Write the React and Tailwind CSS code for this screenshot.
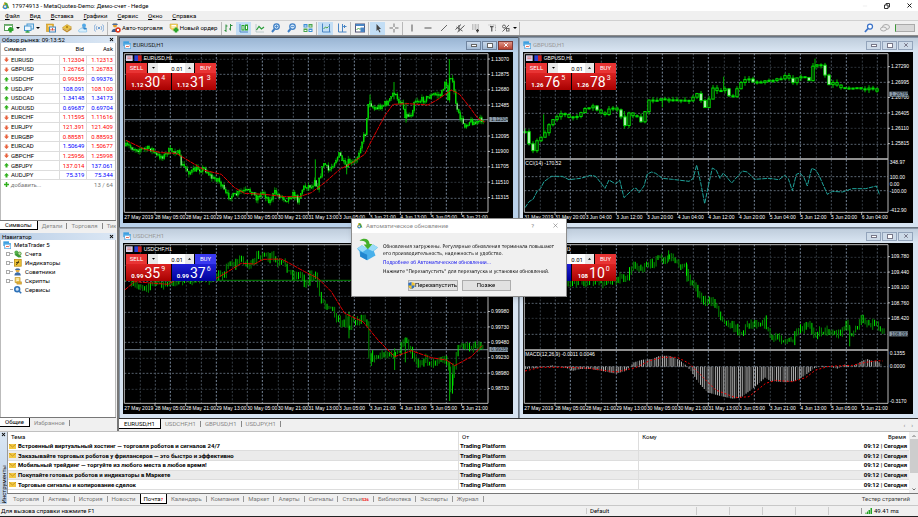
import { useState } from 'react';
import { X, Minus } from 'lucide-react';

const QUOTES = [
  { symbol: 'EURUSD', up: false, bid: '1.12304', bidUp: false, ask: '1.12313', askUp: false },
  { symbol: 'GBPUSD', up: false, bid: '1.26765', bidUp: false, ask: '1.26783', askUp: false },
  { symbol: 'USDCHF', up: true, bid: '0.99359', bidUp: false, ask: '0.99376', askUp: true },
  { symbol: 'USDJPY', up: true, bid: '108.091', bidUp: true, ask: '108.100', askUp: false },
  { symbol: 'USDCAD', up: true, bid: '1.34148', bidUp: true, ask: '1.34173', askUp: true },
  { symbol: 'AUDUSD', up: true, bid: '0.69687', bidUp: true, ask: '0.69704', askUp: true },
  { symbol: 'EURCHF', up: false, bid: '1.11595', bidUp: false, ask: '1.11616', askUp: false },
  { symbol: 'EURJPY', up: false, bid: '121.391', bidUp: false, ask: '121.409', askUp: false },
  { symbol: 'EURGBP', up: false, bid: '0.88581', bidUp: false, ask: '0.88593', askUp: false },
  { symbol: 'EURCAD', up: false, bid: '1.50649', bidUp: true, ask: '1.50677', askUp: false },
  { symbol: 'GBPCHF', up: false, bid: '1.25956', bidUp: false, ask: '1.25998', askUp: false },
  { symbol: 'GBPJPY', up: true, bid: '137.014', bidUp: false, ask: '137.061', askUp: true },
  { symbol: 'AUDJPY', up: true, bid: '75.319', bidUp: true, ask: '75.344', askUp: true },
];

const MAILS = [
  'Встроенный виртуальный хостинг — торговля роботов и сигналов 24/7',
  'Заказывайте торговых роботов у фрилансеров — это быстро и эффективно',
  'Мобильный трейдинг — торгуйте из любого места в любое время!',
  'Покупайте готовых роботов и индикаторы в Маркете',
  'Торговые сигналы и копирование сделок',
];

const TOOL_TABS = [
  ['Торговля'], ['Активы'], ['История'], ['Новости'], ['Почта', '7'], ['Календарь'], ['Компания'],
  ['Маркет'], ['Алерты'], ['Сигналы'], ['Статьи', '526'], ['Библиотека'], ['Эксперты'], ['Журнал'],
];

// Chart space is 3 units per pixel
const CHARTS = [
  {
    symbol: 'EURUSD', active: true, view: '15 48 1170 513', top: 52, bottom: 529, priceBottom: 529,
    style: 'candles', step: 4.6, bid: 251, tag: '1.12304', hStart: 69,
    sell: ['1.12', '30', '4'], buy: ['1.12', '31', '3'], buyUp: false,
    prices: ['1.13070', '1.12875', '1.12680', '1.12485', '', '1.12095', '1.11900', '1.11705', '1.11510', '1.11315'],
    times: ['27 May 2019', '28 May 05:00', '28 May 21:00', '29 May 13:00', '30 May 05:00', '30 May 21:00', '31 May 13:00', '3 Jun 05:00', '3 Jun 21:00', '4 Jun 13:00', '5 Jun 05:00', '5 Jun 21:00'],
    path: [[24, 330], [60, 340], [100, 338], [115, 360], [140, 360], [150, 345], [178, 345], [190, 385], [215, 410], [240, 398], [262, 400], [285, 430], [300, 428], [325, 478], [350, 480], [365, 468], [400, 465], [415, 485], [435, 468], [455, 497], [470, 470], [490, 482], [505, 490], [525, 475], [540, 492], [555, 455], [575, 448], [582, 455], [590, 425], [597, 460], [612, 400], [618, 380], [632, 405], [650, 375], [665, 355], [685, 400], [692, 375], [700, 385], [715, 375], [730, 320], [742, 290], [748, 220], [755, 195], [768, 220], [800, 205], [815, 195], [828, 165], [840, 200], [850, 190], [862, 240], [880, 235], [890, 190], [905, 195], [930, 185], [950, 175], [970, 178], [982, 130], [990, 190], [996, 100], [1010, 180], [1018, 230], [1040, 268], [1055, 255], [1075, 262], [1100, 245]],
    spikes: [[994, 69, 130], [828, 138, 190], [592, 370, 450], [864, 200, 260], [686, 385, 415], [756, 176, 215]],
    ma: '24,313 80,340 130,350 175,352 260,403 310,415 350,455 380,472 440,475 500,482 545,482 580,470 620,440 665,400 700,382 740,355 760,315 800,240 825,205 870,203 930,207 960,190 1000,162 1025,175 1060,220 1080,248 1100,258',
  },
  {
    symbol: 'GBPUSD', view: '12 48 1170 513', top: 52, bottom: 529, priceBottom: 366,
    style: 'hollow', step: 12, bid: 175, tag: '1.26765', hStart: 92,
    sell: ['1.26', '76', '5'], buy: ['1.26', '78', '3'], buyUp: false,
    prices: ['1.27290', '1.26995', '1.26700', '1.26405', '1.26110', '1.25815'],
    times: ['31 May 2019', '31 May 20:00', '3 Jun 04:00', '3 Jun 12:00', '3 Jun 20:00', '4 Jun 04:00', '4 Jun 12:00', '4 Jun 20:00', '5 Jun 04:00', '5 Jun 12:00', '5 Jun 20:00', '6 Jun 04:00'],
    path: [[18, 290], [30, 325], [45, 350], [55, 310], [75, 295], [90, 265], [105, 245], [130, 230], [150, 245], [180, 240], [200, 215], [225, 210], [240, 230], [262, 238], [275, 210], [300, 225], [318, 270], [330, 232], [350, 240], [370, 265], [385, 192], [410, 190], [440, 193], [470, 193], [510, 192], [540, 170], [548, 205], [560, 215], [575, 180], [582, 155], [600, 165], [615, 155], [630, 180], [645, 180], [655, 155], [668, 135], [690, 128], [700, 140], [750, 133], [790, 130], [800, 118], [820, 140], [838, 118], [860, 128], [872, 138], [880, 90], [900, 88], [912, 90], [925, 150], [940, 140], [970, 160], [1000, 153], [1030, 160], [1060, 155], [1085, 175]],
    spikes: [[74, 235, 300], [614, 122, 160], [888, 68, 100], [430, 190, 214], [316, 225, 278]],
    indicator: {
      label: 'CCI(14) -170.52', kind: 'line', levels: [422, 464],
      prices: [[379, '348.97'], [424, '100.00'], [444, '0.00'], [466, '-100.00'], [522, '-412.90']],
      line: '18,515 30,497 42,490 55,465 65,457 75,437 97,421 130,421 150,431 185,427 215,418 230,421 245,440 258,457 270,432 290,444 302,432 315,485 345,457 352,457 360,470 375,450 385,414 398,408 410,412 430,427 460,430 510,436 522,428 533,387 545,440 557,503 568,450 580,396 592,403 603,427 613,411 638,441 670,405 685,408 707,430 750,427 780,431 797,418 808,428 820,464 832,415 843,411 855,425 865,450 878,397 890,402 900,418 925,475 940,466 970,468 1000,458 1040,458 1072,450 1082,477',
    },
  },
  {
    symbol: 'USDCHF', view: '15 54 1170 513', top: 58, bottom: 535, priceBottom: 535,
    style: 'bars', step: 5.7, bid: 374, order: 166, tag: '0.99359', hStart: 121,
    sell: ['0.99', '35', '9'], buy: ['0.99', '37', '6'], buyUp: true,
    prices: ['', '', '', '0.99980', '0.99730', '0.99480', '0.99230', '0.98980', '0.98730'],
    times: ['27 May 2019', '28 May 05:00', '28 May 21:00', '29 May 13:00', '30 May 05:00', '30 May 21:00', '31 May 13:00', '3 Jun 05:00', '3 Jun 21:00', '4 Jun 13:00', '5 Jun 05:00', '5 Jun 21:00'],
    path: [[40, 180], [90, 185], [110, 170], [130, 175], [150, 180], [170, 165], [295, 160], [320, 140], [335, 110], [350, 120], [370, 100], [385, 118], [408, 120], [420, 85], [432, 90], [440, 95], [450, 105], [460, 88], [478, 120], [500, 112], [515, 145], [530, 150], [550, 150], [565, 180], [575, 150], [595, 160], [605, 210], [620, 240], [640, 240], [655, 280], [675, 300], [685, 270], [692, 320], [700, 285], [725, 285], [738, 270], [748, 300], [752, 390], [765, 400], [800, 390], [815, 380], [828, 395], [850, 370], [862, 350], [875, 375], [890, 410], [900, 415], [920, 400], [940, 415], [965, 405], [985, 405], [993, 430], [997, 500], [1008, 430], [1018, 370], [1035, 360], [1050, 370], [1075, 358], [1100, 372]],
    spikes: [[995, 410, 528], [693, 260, 340], [830, 370, 435], [862, 337, 412], [760, 385, 423], [1005, 415, 482]],
    ma: '20,195 50,170 150,178 200,150 295,160 330,140 370,115 410,117 435,103 490,102 515,115 560,140 600,160 640,200 680,265 735,290 780,345 830,395 880,377 940,398 985,405 1010,422 1060,395 1092,362',
  },
  {
    symbol: 'USDJPY', view: '12 54 1170 513', top: 58, bottom: 535, priceBottom: 372,
    style: 'bars', step: 5.7, bid: 327, tag: '108.091', hStart: 95,
    sell: ['108', '09', '1'], buy: ['108', '10', '0'], buyUp: false, sellUp: true,
    prices: ['109.780', '109.440', '109.100', '108.760', '108.420'],
    times: ['27 May 2019', '28 May 05:00', '28 May 21:00', '29 May 13:00', '30 May 05:00', '30 May 21:00', '31 May 13:00', '3 Jun 05:00', '3 Jun 21:00', '4 Jun 13:00', '5 Jun 05:00', '5 Jun 21:00'],
    path: [[18, 150], [150, 170], [235, 170], [275, 172], [300, 155], [320, 160], [345, 120], [365, 130], [390, 125], [410, 100], [440, 110], [450, 95], [470, 115], [500, 125], [510, 165], [530, 185], [550, 225], [575, 235], [585, 225], [600, 265], [620, 290], [650, 310], [670, 325], [685, 295], [715, 295], [738, 290], [750, 325], [760, 345], [775, 335], [795, 345], [820, 350], [835, 325], [870, 300], [885, 325], [920, 315], [955, 330], [985, 295], [995, 340], [1010, 310], [1030, 280], [1045, 295], [1070, 295], [1100, 325]],
    spikes: [[449, 76, 110], [992, 300, 364], [504, 118, 170], [1027, 270, 300]],
    indicator: {
      label: 'MACD(12,26,9) -0.0011 0.0046', kind: 'hist', zero: 425, levels: [425],
      prices: [[384, '0.1355'], [423, '0.0000'], [528, '-0.3170']],
      hist: [[18, 432], [65, 428], [100, 421], [145, 430], [160, 438], [185, 432], [215, 432], [250, 438], [290, 446], [320, 438], [345, 412], [370, 404], [400, 402], [420, 393], [450, 392], [480, 404], [500, 420], [515, 437], [540, 475], [565, 502], [600, 512], [640, 521], [665, 518], [700, 492], [720, 475], [738, 458], [755, 468], [800, 472], [830, 468], [860, 450], [885, 430], [910, 422], [935, 426], [955, 431], [975, 418], [1000, 424], [1030, 407], [1045, 402], [1060, 408], [1075, 408], [1090, 420]],
      line: '18,438 65,427 150,427 210,430 290,441 350,428 390,408 430,397 475,397 510,415 550,455 590,495 650,518 690,515 740,475 770,466 820,470 860,458 890,435 930,424 1000,421 1040,412 1075,407 1092,408',
    },
  },
];

function valueAt(points, x) {
  const i = points.findIndex(p => p[0] >= x);
  if (i <= 0) return points[i === 0 ? 0 : points.length - 1][1];
  const [x0, y0] = points[i - 1];
  const [x1, y1] = points[i];
  return y0 + ((y1 - y0) * (x - x0)) / (x1 - x0);
}

function makeCandles(path, step, noise) {
  const list = [];
  let seed = 7;
  const rand = () => {
    seed = (seed * 16807) % 2147483647;
    return seed / 2147483647;
  };
  let open = path[0][1];
  for (let x = path[0][0]; x <= path[path.length - 1][0]; x += step) {
    const close = valueAt(path, x) + (rand() - 0.5) * noise;
    list.push({
      x,
      open,
      close,
      high: Math.min(open, close) - rand() * 10,
      low: Math.max(open, close) + rand() * 10,
    });
    open = close;
  }
  return list;
}

function Candles({ chart }) {
  const hollow = chart.style === 'hollow';
  const w = hollow ? 7 : 3;
  return (
    <g>
      {chart.spikes.map(([x, y0, y1]) => (
        <path key={x} d={`M${x} ${y0}V${y1}`} stroke="#00b400" strokeWidth="3" />
      ))}
      {makeCandles(chart.path, chart.step, hollow ? 6 : 18).map((c, i) => {
        const top = Math.min(c.open, c.close);
        const h = Math.max(3, Math.abs(c.close - c.open));
        if (chart.style === 'bars') {
          return <path key={i} d={`M${c.x} ${c.high - 2}V${c.low + 2}`} stroke={i % 3 === 1 ? '#00ee00' : '#008a00'} strokeWidth="3" />;
        }
        const drop = c.close - c.open;
        const fill = hollow ? (drop > 9 ? '#fff' : '#000') : (drop > 0 && i % 4 === 0 ? '#fff' : '#00e600');
        return (
          <g key={i}>
            <path d={`M${c.x} ${c.high}V${c.low}`} stroke="#00c000" strokeWidth={hollow ? 3 : 2} />
            <rect x={c.x - w / 2} y={top} width={w} height={h} fill={fill} stroke="#00e000" strokeWidth={hollow ? 3 : 1} />
          </g>
        );
      })}
    </g>
  );
}

function Plot({ chart }) {
  const [ox, oy] = chart.view.split(' ').map(Number);
  const right = ox + 1095;
  const left = ox + 4;
  const { top, bottom, priceBottom, indicator } = chart;
  const verticals = Array.from({ length: 23 }, (_, k) => Math.round((ox + 50 + k * 46) / 3) * 3 + 1);
  const horizontals = [];
  for (let y = chart.hStart, k = 0; y < priceBottom - 8; y += 46.2, k++) horizontals.push([Math.round((y - oy) / 3) * 3 + oy + 1, k]);

  return (
    <svg viewBox={chart.view} className="block h-auto w-full bg-black" role="img" aria-label={`${chart.symbol} H1`}>
      <g strokeWidth="3" strokeDasharray="6 5">
        {verticals.map((x, k) => (
          <path key={x} d={`M${x} ${top}V${bottom}`} stroke={['#343b43', '#4a545e', '#77879a'][k % 3]} />
        ))}
        {horizontals.map(([y, k]) => (
          <path key={y} d={`M${left} ${y}H${right}`} stroke={['#2c3238', '#56616d'][k % 2]} />
        ))}
        {indicator && indicator.levels.map(y => <path key={y} d={`M${left} ${y}H${right}`} stroke="#5d6873" />)}
      </g>

      {chart.order && <path d={`M${left} ${chart.order}H${right}`} stroke="#008000" strokeWidth="3" />}
      {!indicator && <path d={`M${left} ${chart.bid}H${right}`} stroke="#66727e" strokeWidth="4" />}
      <Candles chart={chart} />
      {chart.ma && <polyline points={chart.ma} fill="none" stroke="#e00000" strokeWidth="3" strokeDasharray="14 2" />}

      {indicator && (
        <g>
          {indicator.kind === 'hist' && Array.from({ length: 188 }, (_, i) => 20 + i * 5.7).map((x, i) => (
            <path key={x} d={`M${x} ${indicator.zero}V${valueAt(indicator.hist, x)}`} stroke={i % 4 === 3 ? '#4c4c4c' : '#b4b4b4'} strokeWidth="3" />
          ))}
          <polyline
            points={indicator.line}
            fill="none"
            stroke={indicator.kind === 'hist' ? '#f00000' : '#20a39b'}
            strokeWidth="3"
            strokeDasharray={indicator.kind === 'hist' ? '6 6' : '14 3'}
          />
          <path d={`M${left} ${priceBottom + 3}H${right}`} stroke="#c0c0c0" strokeWidth="5" />
        </g>
      )}

      {/* frame and axes */}
      <path d={`M${left} ${bottom}V${top + 1}H${right}V${bottom}Z`} fill="none" stroke="#b8b8b8" strokeWidth="3" />
      <g fill="#ffffff" fontSize="15" className="font-['Liberation_Sans',sans-serif]">
        {chart.prices.map((p, i) => p && (
          <g key={p}>
            <path d={`M${right} ${chart.hStart + i * 46.2}h6`} stroke="#fff" strokeWidth="2" />
            <text x={right + 9} y={chart.hStart + i * 46.2 + 5}>{p}</text>
          </g>
        ))}
        {indicator && indicator.prices.map(([y, p]) => <text key={p} x={right + 5} y={y + 5}>{p}</text>)}
        {chart.times.map((t, i) => (
          <g key={t}>
            {i > 0 && <path d={`M${ox + 4 + i * 92} ${bottom}v8`} stroke="#fff" strokeWidth="2" />}
            <text x={ox + 4 + i * 92} y={bottom + 20}>{t}</text>
          </g>
        ))}
        {indicator && <text x={left + 3} y={priceBottom + 22}>{indicator.label}</text>}
        <text x={ox + 62} y={top + 19}>{`${chart.symbol},H1`}</text>
        <rect x={right + 4} y={chart.bid - 8} width="56" height="15" fill="#8a9bab" />
        <text x={right + 9} y={chart.bid + 5} fill="#101820">{chart.tag}</text>
      </g>
      {/* quick panel toggles */}
      <rect x={ox + 9} y={top + 6} width="20" height="17" fill="#d8d4ee" />
      <path d={`M${ox + 13} ${top + 11}h12m-12 5h12`} stroke="#e08080" strokeWidth="3" />
      <rect x={ox + 34} y={top + 6} width="11" height="17" fill="#2b3fd0" />
      <rect x={ox + 45} y={top + 6} width="11" height="17" fill="#cc2222" />
    </svg>
  );
}

function PriceButton({ parts, up, name }) {
  return (
    <button
      aria-label={name}
      className={`flex h-[17px] flex-1 items-end justify-center gap-px bg-linear-to-b pb-px leading-none ${
        up ? 'from-[#2020d8] to-[#00009a]' : 'from-[#dd2222] to-[#a80000]'
      }`}
    >
      <span className="pb-px text-[6px] font-bold">{parts[0]}</span>
      <span className="text-[14px]">{parts[1]}</span>
      <span className="self-start pt-[2px] text-[7px]">{parts[2]}</span>
    </button>
  );
}

function OneClick({ chart }) {
  const [volume, setVolume] = useState('0.01');
  const red = 'bg-[#e83434]';
  const blue = 'bg-[#3a3af0]';

  return (
    <div className="absolute top-[11px] left-[3px] w-[90px] bg-black text-white">
      <div className="flex h-[10px] gap-px text-[6px] leading-none">
        <button className={`w-[21px] ${chart.sellUp ? blue : red}`}>SELL</button>
        <div className="flex flex-1 bg-white text-black">
          <button aria-label="Меньше" className="flex w-[10px] items-center justify-center bg-[#e8e8e8]">
            <svg viewBox="0 0 5 3" className="w-[3px]"><path d="M0 0h5L2.500 3z" /></svg>
          </button>
          <input
            aria-label={`Объем ${chart.symbol}`}
            value={volume}
            onChange={e => setVolume(e.target.value)}
            className="w-0 min-w-0 flex-1 pr-[2px] text-right outline-none"
          />
          <button aria-label="Больше" className="flex w-[9px] items-center justify-center bg-[#e8e8e8]">
            <svg viewBox="0 0 5 3" className="w-[3px]"><path d="M0 3h5L2.500 0z" /></svg>
          </button>
        </div>
        <button className={`w-[21px] ${chart.buyUp ? blue : red}`}>BUY</button>
      </div>
      <div className="flex gap-px">
        <PriceButton parts={chart.sell} up={chart.sellUp} name="Sell by market" />
        <PriceButton parts={chart.buy} up={chart.buyUp} name="Buy by market" />
      </div>
    </div>
  );
}

function ChartIcon() {
  return (
    <svg viewBox="0 0 24 24" className="h-[8px] w-[8px] shrink-0">
      <rect x="1" y="1" width="17" height="14" fill="#3d9fe0" />
      <rect x="5" y="8" width="18" height="15" fill="#fff" stroke="#4aa5e2" strokeWidth="2" />
      <rect x="5" y="7" width="18" height="4" fill="#4aa5e2" />
      <path d="M8 19l4-4 3 3 5-4" fill="none" stroke="#e0503a" strokeWidth="2.500" />
    </svg>
  );
}

function WindowButton({ active, close, name, children }) {
  const tone = active && close
    ? 'border-[#7c3a36] bg-linear-to-b from-[#dd9488] to-[#b8402f] text-white'
    : active
      ? 'border-[#7085a0] bg-linear-to-b from-[#c8d8ea] to-[#a4bcd6] text-[#666]'
      : 'border-[#93a4bb] bg-[#cddae8] text-[#778]';
  return (
    <button aria-label={name} className={`flex h-[9px] w-[15px] items-center justify-center border ${tone}`}>
      {children}
    </button>
  );
}

function ChartWindow({ chart }) {
  const { active } = chart;
  return (
    <section className={`border-t border-l pr-[5px] pb-[4px] pl-[3px] ${active ? 'border-[#47505a] bg-[#b9d1ea]' : 'border-[#8795a5] bg-[#d7e4f2]'}`}>
      <header className={`-mr-[5px] -ml-[3px] flex h-[14px] items-center gap-[2px] pr-[5px] pl-[3px] ${
        active ? 'bg-linear-to-b from-[#9ab5d3] to-[#b7cfe9] text-[#222]' : 'bg-linear-to-b from-[#bfcddc] to-[#dae6f3] text-[#999]'
      }`}
      >
        <ChartIcon />
        <h2 className="flex-1 text-[6px]">{chart.symbol},H1</h2>
        <div className="flex gap-px">
          <WindowButton active={active} name="Свернуть"><span className="h-[3px] w-[6px] border border-current bg-white" /></WindowButton>
          <WindowButton active={active} name="Развернуть"><span className="h-[5px] w-[6px] border border-current bg-white" /></WindowButton>
          <WindowButton active={active} close name="Закрыть"><X className="h-[6px] w-[6px]" strokeWidth={4} /></WindowButton>
        </div>
      </header>
      <div className="relative">
        <Plot chart={chart} />
        <OneClick chart={chart} />
      </div>
    </section>
  );
}

/* Toolbar drawings, 20x20 */
const ICONS = {
  newChart: <><rect x="1" y="3" width="16" height="12" fill="#fff" stroke="#5a9a5a" strokeWidth="2" /><rect x="1" y="3" width="16" height="3" fill="#7ab87a" /><path d="M13 8v11M8 13h11" stroke="#2ba52b" strokeWidth="5" /></>,
  profiles: <><rect x="6" y="2" width="13" height="10" fill="#d5ebfa" stroke="#4b98cf" strokeWidth="2" /><rect x="1" y="6" width="13" height="9" fill="#eaf6ff" stroke="#4b98cf" strokeWidth="2" /><path d="M7 15v4M3 18h8" stroke="#3aa14a" strokeWidth="3" /></>,
  market: <><rect x="1" y="2" width="14" height="15" fill="#e8b33a" stroke="#b8860b" strokeWidth="1" /><path d="M4 6h8" stroke="#fff" strokeWidth="2" /><rect x="7" y="8" width="12" height="10" fill="#eef6fd" stroke="#4888bd" strokeWidth="2" /><path d="M10 15v-3m3 3v-5m3 5v-3" stroke="#e0503a" strokeWidth="2" /></>,
  gold: <><path d="M1 9l9-6 9 5-9 7z" fill="#f0c848" stroke="#b98a1c" strokeWidth="1" /><path d="M1 10l9 6 9-7v4l-9 6-9-6z" fill="#c08a28" /><circle cx="10" cy="8" r="2.500" fill="#b98a1c" /></>,
  cloud: <><circle cx="12" cy="5" r="4" fill="#54a9e6" /><path d="M6 13c0-6 12-6 12 0z" fill="#2f86cf" /><path d="M2 18a4 4 0 012-6c3-3 7-2 8 1 4-1 7 2 5 5z" fill="#d9effc" stroke="#64aee0" strokeWidth="1" /></>,
  signal: <><circle cx="10" cy="10" r="2" fill="#4a86c5" /><path d="M6 6a6 6 0 000 8m8-8a6 6 0 010 8M3 3a10 10 0 000 14M17 3a10 10 0 010 14" fill="none" stroke="#86aedb" strokeWidth="2" /></>,
  robot: <><circle cx="8" cy="5" r="4" fill="#e0a030" /><path d="M2 4h12l-2-3H4z" fill="#4b6a9b" /><path d="M1 18c0-9 14-9 14 0z" fill="#3f618f" /><circle cx="14" cy="14" r="5.500" fill="#e03a20" /><rect x="12" y="12" width="4" height="4" fill="#fff" /></>,
  order: <><path d="M2 2h15v12H7L2 10z" fill="#f5d668" stroke="#c79c2c" strokeWidth="1" /><path d="M5 5h9M5 8h9" stroke="#fff" strokeWidth="2" /><path d="M14 9v10M9 14h10" stroke="#2ba52b" strokeWidth="5" /></>,
  bars: <path d="M4 3v15M1 15h3M4 6h3M13 2v13M10 12h3M13 5h4" fill="none" stroke="#2c8f3c" strokeWidth="2" />,
  candles: <><path d="M2 2v16h16" fill="none" stroke="#4a86c5" strokeWidth="2" /><rect x="6" y="5" width="4" height="9" fill="#fff" stroke="#2ba52b" strokeWidth="2" /><rect x="13" y="4" width="4" height="10" fill="#fff" stroke="#2ba52b" strokeWidth="2" /></>,
  line: <><path d="M2 2v16h16" fill="none" stroke="#8aa" strokeWidth="1" /><path d="M3 14l5-7 5 5 5-4" fill="none" stroke="#2c9f3c" strokeWidth="2.500" /></>,
  zoomIn: <><circle cx="11" cy="7" r="5.500" fill="#cfe6fa" stroke="#3f7fc4" strokeWidth="2.500" /><path d="M7 12l-5 6" stroke="#3f7fc4" strokeWidth="4" /><path d="M8 7h6M11 4v6" stroke="#3f7fc4" strokeWidth="1.500" /></>,
  zoomOut: <><circle cx="11" cy="7" r="5.500" fill="#cfe6fa" stroke="#3f7fc4" strokeWidth="2.500" /><path d="M7 12l-5 6" stroke="#3f7fc4" strokeWidth="4" /><path d="M8 7h6" stroke="#3f7fc4" strokeWidth="1.500" /></>,
  tile: <><rect x="1" y="2" width="8" height="7" fill="#3c8fd6" /><rect x="11" y="2" width="8" height="7" fill="#49a54c" /><rect x="1" y="11" width="8" height="7" fill="#49a54c" /><rect x="11" y="11" width="8" height="7" fill="#3c8fd6" /><path d="M3 6h4m6 0h4M3 15h4m6 0h4" stroke="#fff" strokeWidth="2" /></>,
  autoScroll: <><path d="M3 1v17h16M17 2v16" fill="none" stroke="#4a86c5" strokeWidth="2" /><path d="M5 12l4-4 3 2 3-3" fill="none" stroke="#49a54c" strokeWidth="2" /></>,
  shift: <><path d="M3 1v17h16M11 2v16" fill="none" stroke="#4a86c5" strokeWidth="2" /><path d="M19 7h-6m3-3l-3 3 3 3" fill="none" stroke="#4a86c5" strokeWidth="2" /></>,
  indicators: <><rect x="1" y="2" width="18" height="16" fill="#fff" stroke="#557" strokeWidth="2" /><rect x="1" y="2" width="18" height="4" fill="#4a86c5" /><path d="M3 14l4-4 3 3 3-3" fill="none" stroke="#49a54c" strokeWidth="2" /><rect x="11" y="9" width="8" height="9" fill="#4a86c5" /></>,
  cursor: <path d="M7 2v14l3-3 3 6 2-1-3-6h4z" fill="#444" />,
  cross: <path d="M10 1v7m0 4v7M1 10h7m4 0h7" stroke="#777" strokeWidth="2" />,
  vline: <path d="M10 3v14" stroke="#555" strokeWidth="2" />,
  hline: <path d="M3 10h14" stroke="#555" strokeWidth="2" />,
  trend: <path d="M4 16L16 4" stroke="#666" strokeWidth="2" />,
  channel: <path d="M1 13L12 3M5 18L19 5M3 8l12 8M8 4v13" fill="none" stroke="#555" strokeWidth="2" />,
  fibo: <><path d="M2 4h14M2 8h14M2 12h14" stroke="#777" strokeWidth="1.500" strokeDasharray="2 1" /><path d="M13 12v7M10 15h6" stroke="#444" strokeWidth="2.500" /></>,
  text: <><path d="M3 4h14v13" fill="none" stroke="#999" strokeWidth="1.500" strokeDasharray="2 1" /><path d="M6 7h7M9.500 7v10" stroke="#555" strokeWidth="2.500" /></>,
  objects: <><circle cx="6" cy="7" r="3" fill="none" stroke="#666" strokeWidth="2" /><path d="M3 17L16 4" stroke="#666" strokeWidth="2" /><rect x="11" y="11" width="5" height="5" fill="none" stroke="#666" strokeWidth="2" /></>,
  search: <><circle cx="12" cy="7" r="5" fill="#fff" stroke="#3a72c8" strokeWidth="2.500" /><path d="M8 11l-6 7" stroke="#3a72c8" strokeWidth="3.500" /></>,
  chat: <><ellipse cx="12" cy="8" rx="7" ry="5" fill="#eee" stroke="#aaa" strokeWidth="2" /><ellipse cx="7" cy="12" rx="6" ry="4" fill="#eee" stroke="#aaa" strokeWidth="2" /></>,
  accounts: <><circle cx="6" cy="6" r="5" fill="#56b14c" /><path d="M1 12c4-5 14-3 18 6l-8 1z" fill="#3c9a36" /><circle cx="14" cy="9" r="4" fill="#cde8a4" stroke="#3c8a36" strokeWidth="2" /></>,
  fx: <><rect x="1" y="1" width="17" height="17" fill="#f1c63a" stroke="#b98c16" strokeWidth="2" /><path d="M6 15l6-11M5 9h8" stroke="#4a3c10" strokeWidth="2.500" /></>,
  advisor: <><circle cx="9" cy="6" r="5" fill="#e3ac40" /><path d="M2 5h14l-3-4H5z" fill="#3d6ba5" /><path d="M1 19c0-11 16-11 16 0z" fill="#3d6ba5" /></>,
  script: <><path d="M3 1h12v13H3z" fill="#f5d668" stroke="#c79c2c" strokeWidth="2" /><path d="M7 12h12v6H7z" fill="#e3b038" stroke="#a87f1c" strokeWidth="1" /><path d="M6 5h6M6 9h6" stroke="#fff" strokeWidth="2" /></>,
  gear: <><circle cx="8" cy="8" r="6" fill="#d3e7fa" stroke="#2f72b8" strokeWidth="4" /><path d="M13 13l5 5" stroke="#2f72b8" strokeWidth="4" /></>,
};

function Icon({ name, className = 'h-[10px] w-[10px]' }) {
  return <svg viewBox="0 0 20 20" className={`shrink-0 ${className}`}>{ICONS[name]}</svg>;
}

function Tool({ name, label, on, caret, width = 'w-[15px]', children }) {
  return (
    <button
      aria-label={label}
      className={`flex h-[13px] shrink-0 items-center justify-center gap-px whitespace-nowrap ${width} ${on ? 'bg-[#c3def5]' : ''}`}
    >
      <Icon name={name} />
      {children}
      {caret && <svg viewBox="0 0 6 3" className="ml-px w-[4px] shrink-0"><path d="M0 0h6L3 3z" /></svg>}
    </button>
  );
}

const Sep = () => <span className="h-[13px] w-px bg-[#b8b8b8]" />;

function Logo({ className }) {
  return (
    <svg viewBox="0 0 24 24" className={className}>
      <path d="M3 18l6-15 7 2-4 14z" fill="#f0b429" />
      <path d="M9 3l8 3 5 13h-8z" fill="#57a63a" />
      <circle cx="11" cy="16" r="6" fill="#3186cf" />
      <circle cx="11" cy="15" r="3" fill="#fff2c8" />
    </svg>
  );
}

function TitleBar() {
  return (
    <header className="flex h-[11px] items-center gap-[2px] bg-white pr-[5px] pl-px">
      <Logo className="h-[9px] w-[9px]" />
      <h1 className="flex-1 text-[6px]">17974913 - MetaQuotes-Demo: Демо-счет - Hedge</h1>
      <div className="flex gap-[16px]">
        <button aria-label="Свернуть"><Minus className="h-[6px] w-[6px] text-[#ddd]" /></button>
        <button aria-label="Свернуть в окно">
          <svg viewBox="0 0 12 12" className="h-[6px] w-[6px]"><path d="M1 4h7v7H1zM4 4V1h7v7H8" fill="none" stroke="#333" strokeWidth="2" /></svg>
        </button>
        <button aria-label="Закрыть"><X className="h-[7px] w-[7px]" strokeWidth={3} /></button>
      </div>
    </header>
  );
}

function MenuBar() {
  return (
    <nav className="flex h-[10px] items-center gap-[10px] border-b border-[#d0d0d0] pl-[5px]">
      {['Файл', 'Вид', 'Вставка', 'Графики', 'Сервис', 'Окно', 'Справка'].map(m => (
        <button key={m}><span className="underline">{m[0]}</span>{m.slice(1)}</button>
      ))}
    </nav>
  );
}

function Toolbar() {
  return (
    <div className="flex h-[15px] items-center gap-px border-b border-[#8a8a8a] pr-[3px] pl-[3px]">
      <Tool name="newChart" label="Новый график" caret width="w-[18px]" />
      <Tool name="profiles" label="Профили" caret width="w-[20px]" />
      <Tool name="market" label="Обзор рынка" />
      <Tool name="gold" label="Маркет" />
      <Tool name="cloud" label="Хостинг" />
      <Tool name="signal" label="Сигналы" />
      <Sep />
      <Tool name="robot" label="Авто-торговля" width="w-[56px]"><span>Авто-торговля</span></Tool>
      <Tool name="order" label="Новый ордер" width="w-[54px]"><span>Новый ордер</span></Tool>
      <Sep />
      <Tool name="bars" label="Бары" width="w-[12px]" />
      <Tool name="candles" label="Свечи" on />
      <Tool name="line" label="Линия" />
      <Tool name="zoomIn" label="Увеличить" />
      <Tool name="zoomOut" label="Уменьшить" />
      <Tool name="tile" label="Упорядочить окна" />
      <Sep />
      <Tool name="autoScroll" label="Автопрокрутка" on />
      <Tool name="shift" label="Сдвиг графика" />
      <Sep />
      <Tool name="indicators" label="Индикаторы" />
      <Sep />
      <Tool name="cursor" label="Курсор" on />
      <Tool name="cross" label="Перекрестие" />
      <Sep />
      <Tool name="vline" label="Вертикальная линия" />
      <Tool name="hline" label="Горизонтальная линия" />
      <Tool name="trend" label="Трендовая линия" />
      <Tool name="channel" label="Канал" />
      <Tool name="fibo" label="Фибоначчи" />
      <Tool name="text" label="Текст" />
      <Tool name="objects" label="Объекты" caret width="w-[18px]" />
      <Sep />
      <div className="ml-auto flex items-center gap-px">
        <Tool name="search" label="Поиск" />
        <Tool name="chat" label="Чат" />
        <span className="ml-[2px] h-[8px] w-[20px] border border-[#aaa] border-l-[#3c9a36] bg-[#d8d8d8]" />
      </div>
    </div>
  );
}

function PanelTitle({ children }) {
  return (
    <div className="flex h-[7px] items-center justify-between bg-linear-to-r from-[#b9cee6] to-[#dbe7f4] pr-[2px] pl-[2px] leading-none">
      <h2>{children}</h2>
      <button aria-label="Закрыть панель"><X className="h-[5px] w-[5px]" strokeWidth={5} /></button>
    </div>
  );
}

function PanelTabs({ tabs, className = '' }) {
  return (
    <div className={`flex h-[10px] shrink-0 items-center overflow-hidden border-t border-[#777] bg-[#f0f0f0] whitespace-nowrap text-[#888] ${className}`}>
      {tabs.map((tab, i) => (
        <button
          key={tab}
          className={i === 0 ? 'h-full border-r border-b border-black bg-white px-[5px] text-black' : 'border-r border-[#888] px-[4px] leading-none'}
        >
          {tab}
        </button>
      ))}
    </div>
  );
}

function Arrow({ up }) {
  return (
    <svg viewBox="0 0 10 10" className="h-[5px] w-[5px]">
      <path d={up ? 'M5 0l5 5H7v4H3V5H0z' : 'M5 10L0 5h3V1h4v4h3z'} fill={up ? '#2fb01c' : '#e8603c'} />
    </svg>
  );
}

function MarketWatch() {
  return (
    <section className="flex h-[194px] flex-col">
      <PanelTitle>Обзор рынка: 09:13:52</PanelTitle>
      <div className="flex-1 border-x border-[#bbb] bg-white">
        <table className="h-[146px] w-full border-collapse leading-none">
          <thead>
            <tr className="h-[12px] border-b border-[#ddd]">
              <th colSpan={2} className="pl-[3px] text-left font-normal">Символ</th>
              <th className="w-[27px] pr-[2px] text-right font-normal">Bid</th>
              <th className="w-[29px] pr-[2px] text-right font-normal">Ask</th>
            </tr>
          </thead>
          <tbody>
            {QUOTES.map(q => (
              <tr key={q.symbol} className="border-b border-[#ddd]">
                <td className="w-[10px] pl-[3px]"><Arrow up={q.up} /></td>
                <td className="border-r border-[#ddd]">{q.symbol}</td>
                <td className={`border-r border-[#ddd] pr-px text-right ${q.bidUp ? 'text-[#0000ff]' : 'text-[#ff0000]'}`}>{q.bid}</td>
                <td className={`pr-[2px] text-right ${q.askUp ? 'text-[#0000ff]' : 'text-[#ff0000]'}`}>{q.ask}</td>
              </tr>
            ))}
            <tr className="text-[#777]">
              <td className="pl-[3px]">
                <svg viewBox="0 0 10 10" className="h-[5px] w-[5px]"><path d="M5 0v10M0 5h10" stroke="#2fb01c" strokeWidth="3" /></svg>
              </td>
              <td colSpan={2} className="italic">добавить...</td>
              <td className="pr-[2px] text-right">13 / 64</td>
            </tr>
          </tbody>
        </table>
      </div>
      <PanelTabs tabs={['Символы', 'Детали', 'Торговля', 'Тики']} />
    </section>
  );
}

function Navigator() {
  const items = [
    ['accounts', 'Счета'], ['fx', 'Индикаторы'], ['advisor', 'Советники'], ['script', 'Скрипты'], ['gear', 'Сервисы'],
  ];
  return (
    <section className="mt-[3px] flex min-h-0 flex-1 flex-col">
      <PanelTitle>Навигатор</PanelTitle>
      <div className="flex-1 border-x border-[#bbb] bg-white pt-px leading-none">
        <div className="flex h-[8px] items-center gap-[3px] pl-[2px]"><ChartIcon />MetaTrader 5</div>
        <ul>
          {items.map(([icon, name], i) => (
            <li key={name} className="flex h-[9px] items-center pl-[5px]">
              <span className={`flex h-[4px] w-[4px] items-center justify-center ${i < 4 ? 'border border-[#aaa]' : ''}`} />
              <span className="mr-[2px] w-[2px] border-t border-dotted border-[#aaa]" />
              <Icon name={icon} className="h-[8px] w-[8px]" />
              <span className="pl-[3px]">{name}</span>
            </li>
          ))}
        </ul>
      </div>
      <PanelTabs tabs={['Общие', 'Избранное']} className="mb-[4px]" />
    </section>
  );
}

function Toolbox() {
  return (
    <section className="flex min-h-0 flex-1 border-t border-[#c0c0c0]">
      <div className="flex w-[7px] flex-col items-center justify-between bg-linear-to-b from-[#dbe7f4] to-[#b9cee6]">
        <button aria-label="Закрыть панель"><X className="h-[5px] w-[5px]" strokeWidth={5} /></button>
        <h2 className="rotate-180 leading-none [writing-mode:vertical-rl]">Инструменты</h2>
      </div>
      <div className="flex min-w-0 flex-1 flex-col">
        <div className="flex min-h-0 flex-1 items-start overflow-hidden border-l border-[#999] bg-white">
          <table className="h-[58px] flex-1 table-fixed border-collapse leading-none">
            <thead>
              <tr className="h-[10px] text-left">
                <th className="pl-[3px] font-normal">Тема</th>
                <th className="w-[20%] border-l border-[#ddd] pl-[3px] font-normal">От</th>
                <th className="w-[20%] border-l border-[#ddd] pl-[3px] font-normal">Кому</th>
                <th className="w-[10%] pr-[3px] text-right font-normal">Время</th>
              </tr>
            </thead>
            <tbody className="font-bold">
              {MAILS.map(mail => (
                <tr key={mail} className="border-b border-[#ddd] even:bg-[#ebebeb]">
                  <td>
                    <div className="flex items-center gap-[2px] pl-px">
                      <svg viewBox="0 0 14 10" className="h-[5px] w-[7px]"><rect width="14" height="10" fill="#f3c844" /><path d="M0 0l7 6 7-6" fill="none" stroke="#b98c16" strokeWidth="1.500" /></svg>
                      {mail}
                    </div>
                  </td>
                  <td className="border-l border-[#ddd] pl-px">Trading Platform</td>
                  <td className="border-l border-[#ddd]" />
                  <td className="pr-[2px] text-right">09:12 | Сегодня</td>
                </tr>
              ))}
            </tbody>
          </table>
          <div className="flex w-[9px] flex-col items-center justify-between self-stretch bg-[#f0f0f0] py-[3px]">
            <svg viewBox="0 0 8 5" className="w-[4px]"><path d="M1 4l3-3 3 3" fill="none" stroke="#444" strokeWidth="1.500" /></svg>
            <span className="mt-px mb-auto h-[34px] w-[8px] bg-[#cdcdcd]" />
            <svg viewBox="0 0 8 5" className="w-[4px]"><path d="M1 1l3 3 3-3" fill="none" stroke="#444" strokeWidth="1.500" /></svg>
          </div>
        </div>
        <div className="flex h-[11px] shrink-0 items-center border-t border-[#777] pr-[8px] pl-[2px] leading-none text-[#777]">
          {TOOL_TABS.map(([name, count]) => (
            <button
              key={name}
              className={`flex items-center ${
                name === 'Почта' ? '-ml-px h-full border-x border-b border-black bg-white px-[3px] text-black' : 'border-r border-[#999] px-[4px]'
              }`}
            >
              {name}
              {count && <sub className="text-[4px] font-bold text-[#ee1111]">{count}</sub>}
            </button>
          ))}
          <button className="ml-auto text-[#444]">Тестер стратегий</button>
        </div>
      </div>
    </section>
  );
}

function StatusBar() {
  return (
    <footer className="mt-px flex h-[12px] shrink-0 items-center border-t border-b border-t-[#c8c8c8] border-b-[#222] pl-px leading-none">
      <span className="flex-1">Для вызова справки нажмите F1</span>
      <span className="w-[110px] border-l border-[#ccc] pl-[3px]">Default</span>
      {[0, 1, 2, 3, 4].map(i => <span key={i} className="h-[8px] w-[33px] border-l border-[#ccc]" />)}
      <span className="flex w-[57px] items-center gap-[2px] border-l border-[#999] pl-[3px]">
        <svg viewBox="0 0 14 12" className="h-[6px] w-[7px]"><path d="M1 12V9h2v3zM4 12V7h2v5zM7 12V4h3v8zM11 12V0h3v12z" fill="#22a322" /></svg>
        49.41 ms
      </span>
    </footer>
  );
}

function UpdateDialog({ onClose }) {
  return (
    <div className="fixed inset-0 flex items-center justify-center pb-[3px]">
      <div role="dialog" aria-labelledby="update-title" className="w-[216px] border border-[#8c8c8c] bg-[#f0f0f0] text-black shadow-md">
        <header className="flex h-[14px] items-center gap-[3px] bg-white pr-[7px] pl-[4px]">
          <Logo className="h-[7px] w-[7px]" />
          <h2 id="update-title" className="flex-1 text-[#888]">Автоматическое обновление</h2>
          <button aria-label="Справка" className="mr-[15px] text-[#888]">?</button>
          <button aria-label="Закрыть" onClick={onClose}><X className="h-[7px] w-[7px] text-[#777]" strokeWidth={2} /></button>
        </header>
        <div className="flex gap-[4px] pt-[5px] pl-[4px]">
          <svg viewBox="0 0 66 66" className="h-[23px] w-[23px] shrink-0">
            <path d="M3 30l14-9 16 10 16-12 14 8-12 10 5 13-24 14-20-11-2-14z" fill="#49b0ea" />
            <path d="M3 30l14-9 16 10-14 9zM33 31l16-12 14 8-15 11z" fill="#9adcf8" />
            <path d="M12 39l20 9v16L12 53z" fill="#2186cf" />
            <path d="M10 8C22-2 38 2 39 17h8L34 32 22 19h8c0-8-8-13-20-11z" fill="#43b02a" />
          </svg>
          <div className="pt-[5px] font-['DejaVu_Sans_Condensed','Open_Sans',sans-serif] text-[5px] leading-[7px] whitespace-nowrap">
            <p>Обновления загружены. Регулярные обновления терминала повышают</p>
            <p>его производительность, надежность и удобство.</p>
            <p className="mt-[2px]"><a href="#update" className="text-[#0000ee]">Подробнее об Автоматическом обновлении...</a></p>
            <p className="mt-[2px]">Нажмите "Перезапустить" для перезапуска и установки обновлений.</p>
          </div>
        </div>
        <div className="mt-[5px] flex justify-center gap-[4px] pb-[5px]">
          <button className="flex h-[11px] w-[50px] items-center justify-center border border-[#adadad] bg-[#e1e1e1]">
            <svg viewBox="0 0 20 20" className="h-[7px] w-[7px] shrink-0">
              <path d="M10 0l9 3v7c0 5-4 8-9 10z" fill="#f3c22c" /><path d="M10 0L1 3v7c0 5 4 8 9 10z" fill="#2d6fc4" />
              <path d="M10 10h9c0 5-4 8-9 10z" fill="#2d6fc4" /><path d="M10 10H1c0 5 4 8 9 10z" fill="#f3c22c" />
            </svg>
            Перезапустить
          </button>
          <button onClick={onClose} className="h-[11px] w-[49px] border border-[#adadad] bg-[#e1e1e1]">Позже</button>
        </div>
      </div>
    </div>
  );
}

export default function App() {
  const [updateOpen, setUpdateOpen] = useState(true);

  return (
    <div className="flex h-screen flex-col overflow-hidden bg-[#f0f0f0] font-['Roboto','Noto_Sans',sans-serif] text-[6px] leading-[8px] text-black">
      <TitleBar />
      <MenuBar />
      <Toolbar />
      <main className="flex shrink-0">
        <aside className="flex w-[117px] flex-col pr-px">
          <MarketWatch />
          <Navigator />
        </aside>
        <div className="min-w-0 flex-1 border-l-2 border-[#777] bg-[#f0f0f0]">
          <div className="grid grid-cols-2 gap-px border-b border-[#333] bg-[#6b7580] pt-px">
            {CHARTS.map(chart => <ChartWindow key={chart.symbol} chart={chart} />)}
          </div>
          <div className="flex items-start">
            <PanelTabs tabs={['EURUSD,H1', 'USDCHF,H1', 'GBPUSD,H1', 'USDJPY,H1']} className="mb-[2px] flex-1 border-t-0" />
            <div className="flex gap-[6px] pt-[2px] pr-[5px] text-[#777]">
              <button aria-label="Назад">‹</button>
              <button aria-label="Вперед">›</button>
            </div>
          </div>
        </div>
      </main>
      <Toolbox />
      <StatusBar />
      {updateOpen && <UpdateDialog onClose={() => setUpdateOpen(false)} />}
    </div>
  );
}
